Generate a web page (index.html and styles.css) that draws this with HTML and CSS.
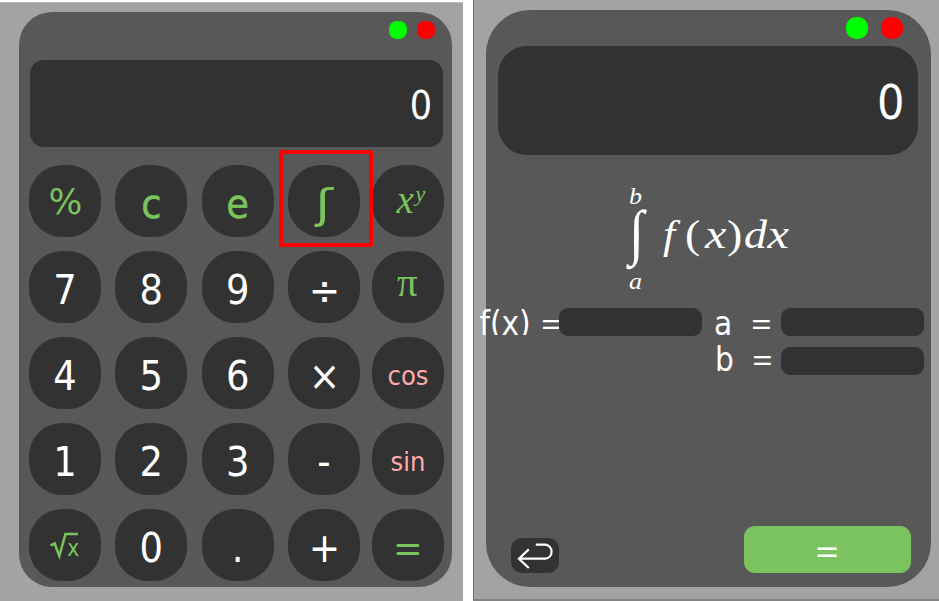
FILE: index.html
```html
<!DOCTYPE html>
<html lang="en">
<head>
<meta charset="utf-8">
<title>Calculator</title>
<link rel="stylesheet" href="styles.css">
</head>
<body>
<main class="screen">
  <section class="window window-main">
    <div class="card card-main">
      <div class="dots"><i class="dot go"></i><i class="dot stop"></i></div>
      <div class="display">0</div>
      <div class="keys">
        <button class="key green percent"><span>%</span></button>
        <button class="key green letter"><span>c</span></button>
        <button class="key green letter"><span>e</span></button>
        <button class="key green picked"><span class="int">ʃ</span></button>
        <button class="key green"><svg viewBox="0 0 72 72"><text class="serif-i" x="24.5" y="48" font-size="39">x</text><text class="serif-i" x="43.5" y="35.5" font-size="22">y</text></svg></button>
        <button class="key"><span>7</span></button>
        <button class="key"><span>8</span></button>
        <button class="key"><span>9</span></button>
        <button class="key"><span class="op">÷</span></button>
        <button class="key green"><svg viewBox="0 0 72 72"><text class="serif" x="25" y="45" font-size="41">π</text></svg></button>
        <button class="key"><span>4</span></button>
        <button class="key"><span>5</span></button>
        <button class="key"><span>6</span></button>
        <button class="key"><span class="op">×</span></button>
        <button class="key fn"><span>cos</span></button>
        <button class="key"><span>1</span></button>
        <button class="key"><span>2</span></button>
        <button class="key"><span>3</span></button>
        <button class="key"><span>-</span></button>
        <button class="key fn"><span>sin</span></button>
        <button class="key green"><svg viewBox="0 0 72 72"><path d="M21.5 36.3 25.7 34.5 30.3 47 36.5 25H49" fill="none" stroke="currentColor" stroke-width="2.5"/><text class="sans" x="38.2" y="47" font-size="22.5">x</text></svg></button>
        <button class="key"><span>0</span></button>
        <button class="key"><span>.</span></button>
        <button class="key"><span class="op">+</span></button>
        <button class="key green"><span class="eq">=</span></button>
      </div>
    </div>
  </section>

  <section class="window window-integral">
    <div class="card card-integral">
      <div class="dots"><i class="dot go"></i><i class="dot stop"></i></div>
      <div class="display">0</div>
      <svg class="formula" viewBox="0 0 180 116">
        <text class="serif-i" x="9" y="25" font-size="23" textLength="13" lengthAdjust="spacingAndGlyphs">b</text>
        <text class="serif" transform="translate(9 74) scale(1.05 1.18)" font-size="52">∫</text>
        <text class="serif-i" x="9" y="110" font-size="23" textLength="13" lengthAdjust="spacingAndGlyphs">a</text>
        <g class="serif-i" font-size="40">
          <text transform="translate(43 69) scale(1.1 1)">f</text>
          <text class="serif" transform="translate(65 69) scale(1.15 1)">(</text>
          <text transform="translate(85 69) scale(1.2 1)">x</text>
          <text class="serif" transform="translate(107 69) scale(1.15 1)">)</text>
          <text transform="translate(124 69) scale(1.15 1)">d</text>
          <text transform="translate(147.5 69) scale(1.2 1)">x</text>
        </g>
      </svg>
      <div class="form">
        <label class="label label-f"><span>f(x)</span><span class="eq">=</span></label><input class="field" aria-label="f(x)">
        <label class="label label-a"><span>a</span><span class="eq">=</span></label><input class="field" aria-label="a">
        <label class="label label-b"><span>b</span><span class="eq">=</span></label><input class="field field-b" aria-label="b">
      </div>
      <div class="actions">
        <button class="back" aria-label="Back"><svg viewBox="0 0 48 35"><path d="M25 6.5H35A7.2 7.2 0 0 1 35 20.7H8M18 11.3 8 20.7 18 30.2" fill="none" stroke="#fff" stroke-width="2.2"/></svg></button>
        <button class="equals"><span class="eq">=</span></button>
      </div>
    </div>
  </section>
</main>
</body>
</html>
```
FILE: styles.css
```css
*, *::after { box-sizing: border-box; }

body {
  margin: 0;
  background: #fff;
  overflow: hidden;
  font-family: "DejaVu Sans Condensed", "DejaVu Sans", sans-serif;
  font-stretch: condensed;
  color: #fff;
}

button, input {
  font: inherit;
  color: inherit;
  border: 0;
  padding: 0;
  margin: 0;
  background: none;
}

text { fill: currentColor; }
.sans { font-family: "DejaVu Sans Condensed", "DejaVu Sans", sans-serif; font-stretch: condensed; }
.serif { font-family: "Liberation Serif", serif; font-style: normal; }
.serif-i { font-family: "Liberation Serif", serif; font-style: italic; }

.screen {
  display: flex;
  width: 939px;
  height: 601px;
  justify-content: space-between;
}

.window { background: #a3a3a3; }

.window-main {
  width: 463px;
  height: 599px;
  margin-top: 2px;
  padding: 9px 10.5px 0 19px;
  border-top: 1px solid #bcbcbc;
}

.window-integral {
  width: 466px;
  height: 601px;
  padding: 10px 0 0 12px;
  border-left: 1px solid #777;
  border-bottom: 2px solid #828282;
}

.card { background: #585858; }
.card-main { width: 433.4px; height: 575px; border-radius: 33px; padding: 9px 9.4px 0 10px; }
.card-integral { width: 445.4px; height: 576.5px; border-radius: 44px; padding: 7px 12px 0; }

.dots { display: flex; justify-content: flex-end; }
.dot { background: #f00; }
.dot.go { background: #0f0; }
.card-main .dots { gap: 10px; padding-right: 8.5px; height: 39px; }
.card-main .dot { width: 18px; height: 18px; border-radius: 8px; }
.card-integral .dots { gap: 13px; padding-right: 16.5px; height: 29px; }
.card-integral .dot { width: 22px; height: 22px; border-radius: 10px; }

.display { background: #323232; text-align: right; }
.card-main .display {
  width: 413px;
  height: 87px;
  margin-left: 1px;
  border-radius: 14px;
  padding-right: 11px;
  font-size: 39px;
  line-height: 92px;
}
.card-integral .display {
  width: 420.4px;
  height: 109px;
  border-radius: 29px;
  padding-right: 14px;
  font-size: 48px;
  line-height: 112px;
}

.keys {
  display: grid;
  grid-template-columns: 86.3px 86.4px 86.3px 84px 72px;
  grid-auto-rows: 72px;
  row-gap: 14px;
  margin-top: 18px;
}

.key {
  position: relative;
  display: flex;
  justify-content: center;
  align-items: flex-start;
  width: 72px;
  height: 72px;
  border-radius: 33px;
  background: #323232;
  font-size: 41px;
  line-height: 78px;
}
.key svg { width: 72px; height: 72px; display: block; }
.green { color: #7bc35e; }
.letter { -webkit-text-stroke: .5px currentColor; }
.percent { font-size: 36px; line-height: 74px; }
.percent span { transform: scaleX(1.1); }
.fn { color: #faa; font-size: 27px; line-height: 77px; }
.int { transform: scaleX(1.4); }
.op { transform: scaleX(1.02); }
.eq { display: inline-block; font-family: "Noto Sans", sans-serif; transform: scaleX(1.18); }

.picked::after {
  content: "";
  position: absolute;
  z-index: 1;
  left: -9px;
  top: -15px;
  width: 94px;
  height: 97px;
  border: 4px solid #f00;
  border-radius: 2px;
}

.formula {
  display: block;
  width: 180px;
  height: 116px;
  margin: 24px 0 0 122px;
}

.form {
  display: grid;
  grid-template-columns: 79.5px 143px 79px 143px;
  grid-template-rows: 28px 28px;
  row-gap: 10.5px;
  margin: 13px 0 0 -18.5px;
}
.label {
  display: grid;
  height: 27px;
  font-size: 33px;
  line-height: 31px;
  white-space: pre;
}
.label .eq { transform: scaleX(1.1); }
.label-f { grid-template-columns: 62px 18px; overflow: hidden; }
.label-a, .label-b {
  grid-template-columns: 38px 20px;
  padding-left: 12px;
}
.label-b { grid-column: 3; margin-top: -3px; padding-left: 13px; }
.field { width: 100%; height: 28px; border-radius: 9px; background: #323232; }

.actions {
  display: flex;
  justify-content: space-between;
  align-items: flex-end;
  height: 47px;
  margin: 151.5px 8.7px 0 13px;
}
.back { width: 47.5px; height: 35px; border-radius: 11px; background: #323232; }
.back svg { display: block; width: 47.5px; height: 35px; }
.equals {
  width: 167px;
  height: 47px;
  border-radius: 11px;
  background: #7bc35e;
  font-size: 35px;
  line-height: 51px;
}
```
